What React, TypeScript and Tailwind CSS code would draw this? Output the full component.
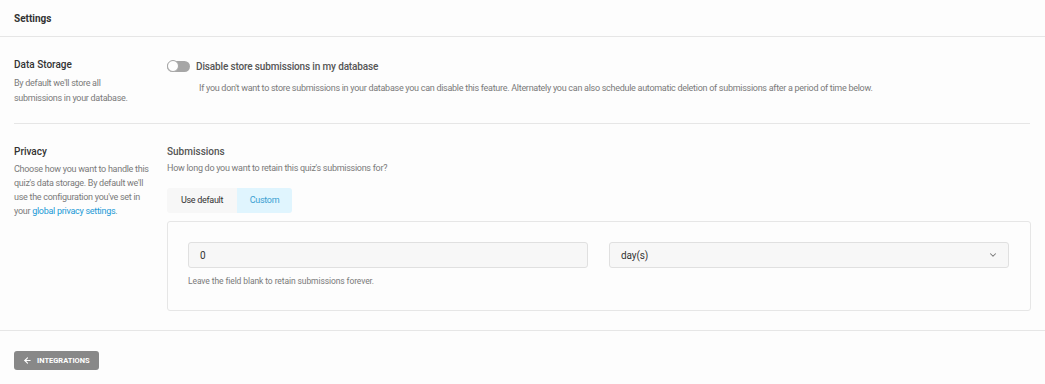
import { ArrowLeft, ChevronDown } from "lucide-react";

export default function App() {
  return (
    <div className="min-h-screen bg-[#fdfdfd] text-[#333] font-['Roboto',sans-serif]">
      {/* Header */}
      <div className="h-[37px] border-b border-[#e6e6e6] px-[14px] flex items-center">
        <h1 className="text-[10px] font-bold text-[#333]">Settings</h1>
      </div>

      <div className="px-[14px]">
        {/* Data Storage */}
        <div className="flex pt-[20px] pb-[17px] border-b border-[#e6e6e6] mr-[1px]">
          <div className="w-[153px] shrink-0">
            <h2 className="text-[10px] font-medium text-[#333] leading-[16px]">Data Storage</h2>
            <p className="mt-[3px] w-[130px] text-[9px] tracking-[-0.28px] leading-[15px] text-[#7a7a7a]">
              By default we'll store all submissions in your database.
            </p>
          </div>
          <div className="flex-1 pt-[1px]">
            <label className="flex items-center h-[16px] gap-[6px]">
              <span className="relative inline-flex w-[23px] h-[11px] rounded-full bg-[#a6a6a6]">
                <span className="absolute left-0 top-[-0.5px] w-[12px] h-[12px] rounded-full bg-white border border-[#a6a6a6]" />
              </span>
              <span className="text-[10px] font-medium tracking-[-0.15px] text-[#555]">Disable store submissions in my database</span>
            </label>
            <p className="mt-[6px] ml-[32px] text-[9px] tracking-[-0.28px] leading-[16px] text-[#7a7a7a]">
              If you don't want to store submissions in your database you can disable this feature. Alternately you can also schedule automatic deletion of submissions after a period of time below.
            </p>
          </div>
        </div>

        {/* Privacy */}
        <div className="flex pt-[20px] pb-[19px]">
          <div className="w-[153px] shrink-0">
            <h2 className="text-[10px] font-medium text-[#333] leading-[16px]">Privacy</h2>
            <p className="mt-[2px] w-[136px] text-[9px] tracking-[-0.28px] leading-[14px] text-[#7a7a7a]">
              Choose how you want to handle this quiz's data storage. By default we'll use the configuration you've set in your{" "}
              <a className="text-[#1a9ad6]">global privacy settings</a>.
            </p>
          </div>
          <div className="flex-1">
            <h3 className="text-[10px] font-medium text-[#555] leading-[16px]">Submissions</h3>
            <p className="mt-[1px] text-[9px] tracking-[-0.28px] leading-[14px] text-[#7a7a7a]">How long do you want to retain this quiz's submissions for?</p>
            <div className="mt-[13px] flex">
              <button className="h-[25px] w-[70px] bg-[#f7f7f7] rounded-l-[3px] text-[9px] tracking-[-0.3px] text-[#333]">Use default</button>
              <button className="h-[25px] w-[55px] bg-[#e0f5fe] rounded-r-[3px] text-[9px] tracking-[-0.3px] text-[#3a9fd1]">Custom</button>
            </div>
            <div className="mt-[8px] border border-[#e6e6e6] rounded-[3px] pl-[20px] pr-[21px] pt-[20px] pb-[23px]">
              <div className="flex gap-[21px]">
                <div className="flex-1">
                  <div className="h-[26px] border border-[#e0e0e0] rounded-[3px] bg-[#f7f7f7] flex items-center px-[11px] text-[10px] text-[#333]">
                    0
                  </div>
                  <p className="mt-[7px] text-[8.5px] tracking-[-0.1px] leading-[12px] text-[#7a7a7a]">Leave the field blank to retain submissions forever.</p>
                </div>
                <div className="flex-1">
                  <div className="h-[26px] border border-[#e0e0e0] rounded-[3px] bg-[#f7f7f7] flex items-center justify-between pl-[11px] pr-[10px] text-[10px] tracking-[-0.1px] text-[#333]">
                    <span>day(s)</span>
                    <ChevronDown className="w-[10px] h-[10px] text-[#777]" strokeWidth={2.5} />
                  </div>
                </div>
              </div>
            </div>
          </div>
        </div>
      </div>

      {/* Footer */}
      <div className="border-t border-[#e6e6e6] px-[14px] pt-[20px] pb-[14px]">
        <button className="h-[19px] w-[85px] pl-[9px] flex items-center gap-[5px] bg-[#888] rounded-[3px] text-white text-[7.5px] font-bold uppercase">
          <ArrowLeft className="w-[9px] h-[9px]" strokeWidth={3} />
          Integrations
        </button>
      </div>
    </div>
  );
}
